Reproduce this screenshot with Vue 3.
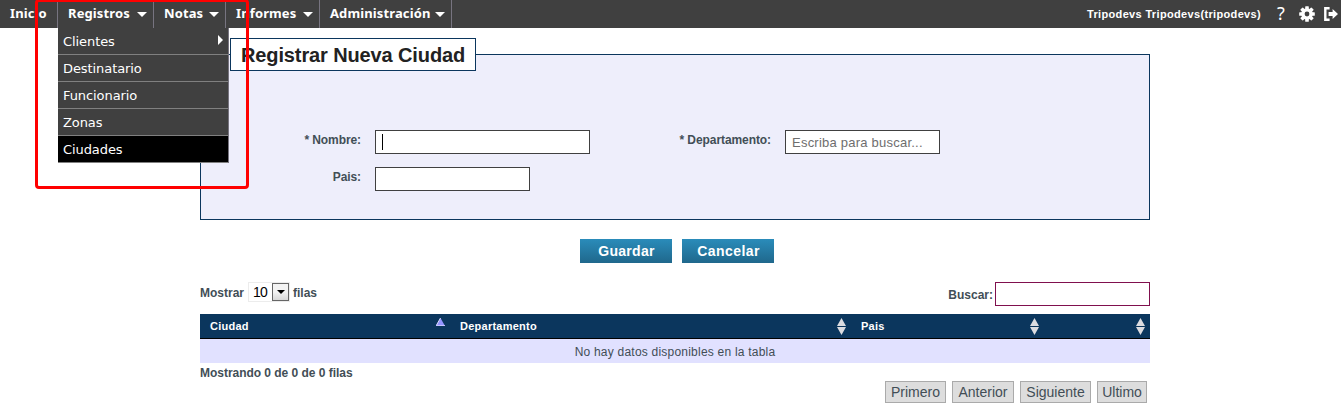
<script setup>
const menu = [
  { label: 'Inicio', cls: 'm-inicio' },
  { label: 'Registros', cls: 'm-registros', caret: true },
  { label: 'Notas', cls: 'm-notas', caret: true },
  { label: 'Informes', cls: 'm-informes', caret: true },
  { label: 'Administración', cls: 'm-admin', caret: true },
]
const submenu = ['Clientes', 'Destinatario', 'Funcionario', 'Zonas', 'Ciudades']
const pages = [
  { label: 'Primero', cls: 'p-first' },
  { label: 'Anterior', cls: 'p-prev' },
  { label: 'Siguiente', cls: 'p-next' },
  { label: 'Ultimo', cls: 'p-last' },
]
const columns = [
  { label: 'Ciudad', sort: 'asc' },
  { label: 'Departamento', sort: 'both' },
  { label: 'Pais', sort: 'both' },
  { label: '', sort: 'both' },
]
</script>

<template>
  <div class="page">
    <header class="bar">
      <nav class="menu">
        <div v-for="m in menu" :key="m.label" class="item" :class="m.cls">
          <span class="txt">{{ m.label }}</span>
          <svg v-if="m.caret" class="caret" width="10" height="5" viewBox="0 0 10 5"><path d="M0 0H10L5 5Z" fill="#fff" /></svg>
        </div>
      </nav>
      <div class="user">
        <span class="name">Tripodevs Tripodevs(tripodevs)</span>
        <span class="help">?</span>
        <svg class="gear" width="16" height="16" viewBox="0 0 16 16">
          <g fill="#fff">
            <rect v-for="a in [0, 45, 90, 135]" :key="a" x="6.2" y="0.2" width="3.6" height="15.6" rx="0.6" :transform="`rotate(${a} 8 8)`" />
            <circle cx="8" cy="8" r="5.8" />
          </g>
          <circle cx="8" cy="8" r="2.4" fill="#404040" />
        </svg>
        <svg class="exit" width="14" height="14" viewBox="0 0 14 14">
          <path d="M5.6 1.2H1.3V12.8H5.6" fill="none" stroke="#fff" stroke-width="2.4" />
          <path d="M4.6 5H8.6V2L14 7L8.6 12V9H4.6Z" fill="#fff" />
        </svg>
      </div>
    </header>

    <ul class="dropdown">
      <li v-for="s in submenu" :key="s" :class="{ active: s === 'Ciudades' }">
        <span>{{ s }}</span>
        <svg v-if="s === 'Clientes'" width="5" height="10" viewBox="0 0 5 10"><path d="M0 0L5 5L0 10Z" fill="#fff" /></svg>
      </li>
    </ul>
    <div class="highlight"></div>

    <main class="content">
      <section class="panel">
        <h1 class="legend"><span>Registrar Nueva Ciudad</span></h1>
        <div class="form">
          <label>* Nombre:</label>
          <div class="field wide"><i class="cursor"></i></div>
          <label>* Departamento:</label>
          <div class="field"><span class="hint">Escriba para buscar...</span></div>
          <label>Pais:</label>
          <div class="field"></div>
        </div>
      </section>

      <div class="actions">
        <button>Guardar</button>
        <button class="cancel">Cancelar</button>
      </div>

      <div class="tools">
        <div class="length">
          <span class="mostrar">Mostrar</span>
          <span class="select"><span class="num">10</span><span class="drop"><svg width="8" height="4" viewBox="0 0 8 4"><path d="M0 0H8L4 4Z" fill="#000" /></svg></span></span>
          <span>filas</span>
        </div>
        <div class="search"><span>Buscar:</span><div class="field"></div></div>
      </div>

      <div class="thead">
        <div v-for="(c, i) in columns" :key="i" class="th">
          <span>{{ c.label }}</span>
          <svg v-if="c.sort === 'asc'" class="asc" width="9" height="8" viewBox="0 0 9 8"><path d="M4.5 0L9 8H0Z" fill="#9494ff" /><path d="M4.5 0L0 8" stroke="#dcdcff" stroke-width="1" /><path d="M0 7.5H9" stroke="#c4c4ff" /></svg>
          <svg v-else class="both" width="9" height="17" viewBox="0 0 9 17"><path d="M4.5 0L9 8H0ZM0 9H9L4.5 17Z" fill="#dcdce0" /></svg>
        </div>
      </div>
      <div class="empty">No hay datos disponibles en la tabla</div>
      <div class="info">Mostrando 0 de 0 de 0 filas</div>
      <div class="pager">
        <span v-for="p in pages" :key="p.label" :class="p.cls">{{ p.label }}</span>
      </div>
    </main>
  </div>
</template>

<style>
body {
  margin: 0;
  background: #fff;
}
</style>

<style scoped>
.page {
  position: relative;
  width: 1341px;
  height: 411px;
  overflow: hidden;
  font: bold 12px/16px "Liberation Sans", Arial, sans-serif;
  color: #424e56;
}
.page * {
  box-sizing: border-box;
}
.bar {
  display: flex;
  justify-content: space-between;
  height: 28px;
  background: #404040;
  color: #fff;
}
.menu {
  display: flex;
  font: bold 13px/27px "Noto Sans", sans-serif;
  letter-spacing: 0.12px;
}
.item {
  display: flex;
  align-items: center;
  justify-content: space-between;
  height: 28px;
  padding: 0 6px 0 10px;
  border-right: 1px solid #777480;
  white-space: nowrap;
}
.item .txt { height: 28px; }
.caret {
  flex: none;
  margin-top: 1px;
}
.m-inicio { width: 58px; }
.m-registros { width: 96px; }
.m-notas { width: 72px; }
.m-informes { width: 94px; }
.m-admin { width: 132px; }
.user {
  display: flex;
  align-items: center;
  width: 254px;
  height: 27px;
}
.name {
  width: 190px;
  font-size: 11px;
  letter-spacing: 0.34px;
  white-space: nowrap;
}
.help {
  width: 22px;
  font: 18px/27px "Noto Sans", sans-serif;
}
.gear { margin-right: 9px; }
.exit { flex: none; }
.dropdown {
  position: absolute;
  z-index: 2;
  left: 58px;
  top: 28px;
  width: 171px;
  margin: 0;
  padding: 0;
  list-style: none;
  border-right: 1px solid #777480;
  background: #404040;
  color: #fff;
  font: 13px/28px "DejaVu Sans", Verdana, sans-serif;
  letter-spacing: -0.08px;
}
.dropdown li {
  display: flex;
  justify-content: space-between;
  height: 27px;
  padding: 0 5px;
  border-bottom: 1px solid #808080;
}
.dropdown li svg { margin-top: 7px; }
.dropdown .active { background: #000; }
.highlight {
  position: absolute;
  z-index: 3;
  left: 35px;
  top: -1px;
  width: 214px;
  height: 190px;
  border: 3px solid #f00;
  border-radius: 4px;
}
.content {
  width: 950px;
  margin: 26px 0 0 200px;
}
.panel {
  height: 166px;
  border: 1px solid #0b365d;
  background: #eeeefb;
}
.legend {
  width: 246px;
  height: 33px;
  margin: -17px 0 0 29px;
  padding-left: 10px;
  border: 1px solid #0b365d;
  background: #fff;
  color: #222;
  font-size: 20px;
  letter-spacing: -0.12px;
  line-height: 32px;
  white-space: nowrap;
}
.form {
  display: grid;
  grid-template-columns: 160px 215px 167px 155px;
  grid-template-rows: 24px 24px;
  column-gap: 14px;
  row-gap: 13px;
  margin-top: 59px;
}
.form label {
  text-align: right;
  letter-spacing: -0.08px;
  line-height: 20px;
}
.field {
  width: 155px;
  height: 24px;
  border: 1px solid #404040;
  background: #fff;
}
.wide { width: 215px; }
.cursor {
  display: block;
  width: 1px;
  height: 16px;
  margin: 3px 0 0 6px;
  background: #000;
}
.hint {
  display: block;
  padding-left: 6px;
  color: #6e6e6e;
  font-weight: normal;
  font-size: 13px;
  letter-spacing: 0.23px;
  line-height: 23px;
  white-space: nowrap;
}
.actions {
  display: flex;
  gap: 10px;
  margin: 19px 0 0 380px;
}
button {
  width: 92px;
  height: 24px;
  padding: 0 0 0 1px;
  border: 0;
  background: linear-gradient(#2a8cba, #20688c);
  color: #fff;
  font: bold 14px/24px "Liberation Sans", Arial, sans-serif;
  letter-spacing: 0.3px;
}
.cancel { letter-spacing: 0.45px; }
.tools {
  display: flex;
  justify-content: space-between;
  height: 32px;
  padding-top: 19px;
  box-sizing: content-box !important;
}
.length, .search {
  display: flex;
  align-items: flex-start;
  line-height: 22px;
}
.mostrar { width: 48px; }
.select {
  display: flex;
  justify-content: space-between;
  width: 42px;
  height: 20px;
  margin-right: 3px;
  border: 1px solid #ececec;
  color: #000;
  font: 14px/19px "Liberation Sans", Arial, sans-serif;
}
.num {
  padding-left: 4px;
  font-size: 14px;
  letter-spacing: -0.7px;
}
.drop {
  display: flex;
  align-items: center;
  justify-content: center;
  width: 17px;
  height: 18px;
  border: 1px solid #666;
  background: linear-gradient(#f3f3f3 50%, #d8d8d8);
}
.search { line-height: 26px; }
.search .field {
  margin-left: 2px;
  border-color: #80104e;
}
.thead {
  display: grid;
  grid-template-columns: 250px 401px 194px 105px;
  height: 25px;
  border-bottom: 1px solid #000;
  background: #0b365d;
  color: #fff;
  font-size: 11px;
  letter-spacing: 0.25px;
  line-height: 25px;
}
.th {
  display: flex;
  justify-content: space-between;
  padding: 0 5px 0 10px;
}
.th:nth-child(3) { padding-right: 6px; }
.asc { margin-top: 4px; }
.both { margin-top: 4px; }
.empty {
  height: 24px;
  background: #e1e1ff;
  text-align: center;
  font-weight: normal;
  letter-spacing: 0.22px;
  line-height: 26px;
}
.info {
  height: 18px;
  letter-spacing: -0.03px;
  line-height: 20px;
}
.pager {
  display: flex;
  justify-content: flex-end;
  gap: 6px;
  padding-right: 3px;
  font-weight: normal;
  font-size: 14px;
  line-height: 21px;
}
.pager span {
  height: 22px;
  border: 1px solid #aaa;
  background: #ddd;
  text-align: center;
}
.p-first { width: 61px; }
.p-prev { width: 62px; }
.p-next { width: 71px; }
.p-last { width: 50px; }
</style>
